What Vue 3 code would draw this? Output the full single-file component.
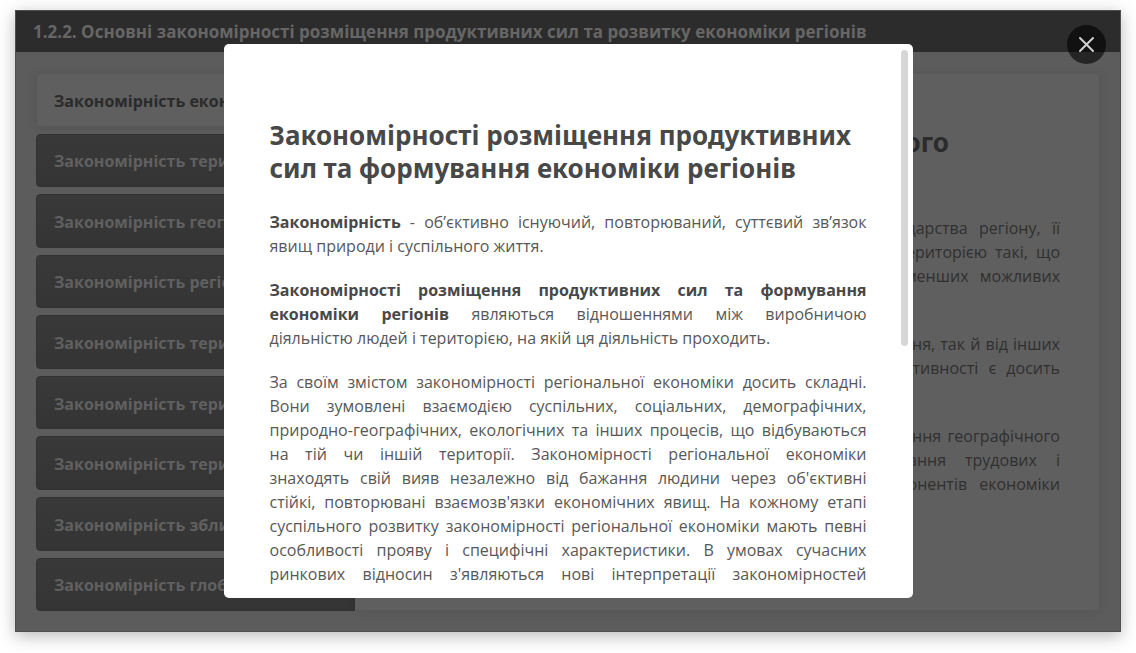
<script setup>
import { ref } from 'vue'

const active = ref(0)
const tabs = [
  'Закономірність економічності',
  'Закономірність територій',
  'Закономірність географічна',
  'Закономірність регіональна',
  'Закономірність територіальна',
  'Закономірність територіального поділу',
  'Закономірність територіальних зв’язків',
  'Закономірність зближення рівнів',
  'Закономірність глобалізації'
]
const article = [
  [
    'Це такі умови або територіальні пропорції розвитку господарства регіону, її',
    'структура, зв’язки між галузями, також містами, районами і територією такі, що',
    'забезпечують достатньо добрий високий результат за найменших можливих',
    'витрат.'
  ],
  [
    'Ефективність району та міста, залежить як від місця розташування, так й від інших',
    'чинників, тому також їх визначення рівня економічної ефективності є досить',
    'складним.'
  ],
  [
    'До головних чинників насамперед і також відносять використання географічного',
    'поділу праці, природних основи раціональне використання трудових і',
    'природних ресурсів та господарських умов розвиток компонентів економіки'
  ]
]
</script>

<template>
  <main class="page">
    <section class="frame">
      <header class="topbar">1.2.2. Основні закономірності розміщення продуктивних сил та розвитку економіки регіонів</header>
      <div class="content">
        <nav class="tabs">
          <button
            v-for="(tab, i) in tabs"
            :key="tab"
            type="button"
            class="tab"
            :class="{ active: active === i }"
            @click="active = i"
          >{{ tab }}</button>
        </nav>
        <article class="panel">
          <h2>Закономірність економічного</h2>
          <p v-for="(lines, i) in article" :key="i">
            <span v-for="line in lines" :key="line" :class="{ last: line.endsWith('.') }">{{ line }}</span>
          </p>
        </article>
      </div>

      <div class="overlay">
        <div class="modal" role="dialog" aria-labelledby="modal-title">
          <div class="body">
            <h1 id="modal-title">Закономірності розміщення продуктивних сил та формування економіки регіонів</h1>
            <p><b>Закономірність</b> - об’єктивно існуючий, повторюваний, суттєвий зв’язок явищ природи і суспільного життя.</p>
            <p>
              <span class="full"><b>Закономірності розміщення продуктивних сил та формування економіки регіонів</b> являються відношеннями між виробничою</span>
              діяльністю людей і територією, на якій ця діяльність проходить.
            </p>
            <p>
              <span class="full">За своїм змістом закономірності регіональної економіки досить складні. Вони зумовлені взаємодією суспільних, соціальних, демографічних, природно-географічних, екологічних та інших процесів, що відбуваються на тій чи іншій території. Закономірності регіональної економіки</span>
              <span class="full">знаходять свій вияв незалежно від бажання людини через об'єктивні</span>
              <span class="full">стійкі, повторювані взаємозв'язки економічних явищ. На кожному етапі</span>
              <span class="full">суспільного розвитку закономірності регіональної економіки мають певні особливості прояву і специфічні характеристики. В умовах сучасних ринкових відносин з'являються нові інтерпретації закономірностей</span>
            </p>
          </div>
          <div class="thumb"></div>
        </div>
        <button class="close" type="button" aria-label="Закрити">
          <svg viewBox="0 0 39 39" aria-hidden="true"><path d="M13 13 L26 26 M26 13 L13 26" /></svg>
        </button>
      </div>
    </section>
  </main>
</template>

<style>
body { background: #fff; }
</style>

<style scoped>
* { box-sizing: border-box; }
.page {
  display: flex;
  min-height: 100vh;
  padding: 10px 15px 21px;
  overflow: hidden;
  font-family: "Open Sans", "Noto Sans", sans-serif;
}
.frame {
  position: relative;
  flex: 1;
  min-width: 0;
  display: flex;
  flex-direction: column;
  background: #5c5c5c;
  box-shadow: 0 4px 16px rgba(0, 0, 0, .28);
  border: 1px solid #4f5150;
}
.topbar {
  height: 41px;
  padding: 0 17px;
  background: #2c2c2c;
  color: #666;
  font: bold 17px/41px "Open Sans", sans-serif;
  white-space: nowrap;
  overflow: hidden;
}
.content {
  flex: 1;
  display: flex;
  padding: 21px 20px 20px;
}
.tabs {
  flex: 0 0 319px;
  min-width: 0;
  display: flex;
  flex-direction: column;
  gap: 7px;
}
.tab {
  flex: 1;
  min-width: 0;
  padding: 2px 17px 0;
  border: 1px solid #323232;
  border-radius: 4px 0 0 4px;
  background: linear-gradient(#393939, #343434);
  color: #606060;
  font: bold 16px/24px "Open Sans", sans-serif;
  text-align: left;
  white-space: nowrap;
}
.tab.active {
  background: #5f5f5f;
  border-color: #595959;
  color: #2b2b2b;
  box-shadow: 0 1px 8px rgba(0, 0, 0, .12);
}
.panel {
  flex: 1;
  min-width: 0;
  padding: 52px 39px 0 46px;
  border: 1px solid #595959;
  border-left: 0;
  border-radius: 0 4px 4px 0;
  background: #5f5f5f;
  box-shadow: 1px 1px 8px rgba(0, 0, 0, .08);
  color: #303030;
  font-size: 16px;
  line-height: 24px;
}
.panel h2 {
  margin: 0 0 57px;
  color: #2b2b2b;
  font: bold 26px/33px "Noto Sans", sans-serif;
  text-align: right;
  padding-right: 111px;
  white-space: nowrap;
}
.panel p { margin: 0 0 20px; }
.panel span {
  display: block;
  white-space: nowrap;
  text-align-last: justify;
}
.panel .last { text-align-last: left; }
.overlay {
  position: absolute;
  inset: 0;
  display: flex;
  justify-content: center;
  padding: 33px 0;
}
.modal {
  position: relative;
  width: 689px;
  max-width: 100%;
  border-radius: 5px;
  background: #fff;
  overflow: hidden;
}
.body {
  height: 100%;
  padding: 75px 46px 0;
  color: #585858;
  font-size: 16px;
  line-height: 24px;
  text-align: justify;
}
.body h1 {
  margin: 0 0 25px;
  color: #484848;
  font: bold 26px/33px "Noto Sans", sans-serif;
  text-align: left;
}
.body p { margin: 0 0 20px; }
.body b { color: #484848; }
.full { display: block; text-align-last: justify; }
.thumb {
  position: absolute;
  top: 6px;
  right: 5px;
  width: 7px;
  height: 296px;
  border-radius: 4px;
  background: #d6d6d6;
}
.close {
  position: absolute;
  top: 14px;
  right: 14px;
  width: 39px;
  height: 39px;
  padding: 0;
  border: 0;
  border-radius: 50%;
  background: rgba(0, 0, 0, .6);
}
.close svg { display: block; width: 39px; height: 39px; }
.close path { fill: none; stroke: #d0d0d0; stroke-width: 2; stroke-linecap: round; }
</style>
